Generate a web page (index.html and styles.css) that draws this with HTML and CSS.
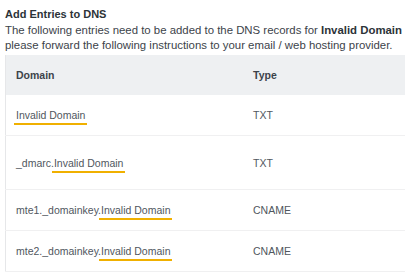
FILE: index.html
```html
<!DOCTYPE html>
<html lang="en">
<head>
    <meta charset="UTF-8">
    <meta name="viewport" content="width=device-width, initial-scale=1.0">
    <title>DNS Entries</title>
    <link rel="stylesheet" href="styles.css">
</head>
<body>
    <div class="dns-panel">
        <h3 class="dns-title">Add Entries to DNS</h3>
        <p class="dns-intro">
            The following entries need to be added to the DNS records for <strong>Invalid Domain</strong><br>
            please forward the following instructions to your email / web hosting provider.
        </p>

        <!-- DNS records table -->
        <table class="dns-table">
            <thead>
                <tr>
                    <th class="col-domain">Domain</th>
                    <th>Type</th>
                </tr>
            </thead>
            <tbody>
                <tr>
                    <td><span class="mark">Invalid Domain</span></td>
                    <td>TXT</td>
                </tr>
                <tr class="tall">
                    <td>_dmarc.<span class="mark">Invalid Domain</span></td>
                    <td>TXT</td>
                </tr>
                <tr>
                    <td>mte1._domainkey.<span class="mark">Invalid Domain</span></td>
                    <td>CNAME</td>
                </tr>
                <tr>
                    <td>mte2._domainkey.<span class="mark">Invalid Domain</span></td>
                    <td>CNAME</td>
                </tr>
            </tbody>
        </table>
    </div>
</body>
</html>
```

FILE: styles.css
```css
body {
    font-family: "Liberation Sans", Arial, sans-serif;
    margin: 0;
    padding: 0;
    background-color: #fff;
    overflow: hidden;
    color: #3c434a;
}
.dns-panel {
    padding: 7px 0 0 5px;
    width: 480px;
}
.dns-title {
    font-size: 11px;
    font-weight: bold;
    margin: 0;
    line-height: 15px;
    color: #2c3338;
}
.dns-intro {
    font-size: 11.4px;
    line-height: 15px;
    margin: 1px 0 2px;
    white-space: nowrap;
}
.dns-intro strong {
    font-weight: bold;
    color: #2c3338;
}
.dns-table {
    border-collapse: collapse;
    width: 480px;
    border-left: 1px solid #e6e7e9;
    font-size: 10.5px;
}
.dns-table th {
    background-color: #eef0f2;
    text-align: left;
    font-weight: bold;
    height: 40px;
    padding: 0 10px;
    color: #3c434a;
}
.dns-table .col-domain {
    width: 217px;
}
.dns-table td {
    height: 40px;
    padding: 0 10px;
    border-bottom: 1px solid #f0f0f1;
    color: #50575e;
}
.dns-table tr.tall td {
    height: 53px;
}
.mark {
    border-bottom: 2px solid #f0b000;
    padding: 0 2px 2px;
    margin: 0 -2px;
}
```
